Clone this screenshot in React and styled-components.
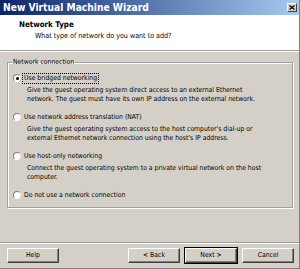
import React from 'react';
import styled, { createGlobalStyle, css } from 'styled-components';

const GlobalStyle = createGlobalStyle`
  html, body {
    margin: 0;
    padding: 0;
    background: #d4d0c8;
  }
`;

const FONT = `"DejaVu Sans Condensed", "DejaVu Sans", Tahoma, sans-serif`;

const Window = styled.div`
  width: 300px;
  height: 269px;
  box-sizing: border-box;
  display: flex;
  flex-direction: column;
  background: #d4d0c8;
  border-right: 1px solid #808080;
  border-bottom: 1px solid #808080;
  font-family: ${FONT};
  font-size: 6.8px;
  color: #000;
  overflow: hidden;
`;

const TitleBar = styled.div`
  height: 15px;
  flex: none;
  display: flex;
  align-items: center;
  justify-content: space-between;
  padding: 0 2px 0 3px;
  background: linear-gradient(to right, #0a246a, #a6caf0);
`;

const TitleText = styled.span`
  color: #fff;
  font-weight: bold;
  font-size: 10.2px;
`;

const CloseButton = styled.div`
  width: 10px;
  height: 9px;
  box-sizing: border-box;
  background: #d4d0c8;
  border: 1px solid;
  border-color: #fff #404040 #404040 #fff;
  display: flex;
  align-items: center;
  justify-content: center;
  svg {
    display: block;
  }
`;

const Header = styled.div`
  height: 36px;
  flex: none;
  background: #fff;
  border-bottom: 1px solid #a0a0a0;
  box-shadow: 0 1px 0 #fff;
  padding: 5px 0 0 19px;
  box-sizing: border-box;
`;

const HeaderTitle = styled.div`
  font-weight: bold;
  font-size: 7.9px;
  line-height: 10px;
`;

const HeaderSub = styled.div`
  font-size: 7.1px;
  line-height: 11px;
  padding-left: 16px;
`;

const Body = styled.div`
  flex: 1;
  padding: 6px 6px 0 7px;
`;

const Group = styled.fieldset`
  margin: 0;
  padding: 6px 0 7px 5px;
  border: 1px solid #a0a0a0;
  box-shadow: inset 1px 1px 0 #fff, 1px 1px 0 #fff;
`;

const Legend = styled.legend`
  padding: 0 1px;
  margin-left: -1px;
  line-height: 10px;
`;

const Option = styled.div`
  margin-bottom: 8px;
  &:last-child {
    margin-bottom: 0;
  }
`;

const OptionRow = styled.div`
  display: flex;
  align-items: center;
  height: 10px;
`;

const Radio = styled.span`
  width: 8px;
  height: 8px;
  box-sizing: border-box;
  border-radius: 50%;
  border: 1px solid;
  border-color: #808080 #e8e8e8 #fff #808080;
  background: #fff;
  margin-right: 1px;
  position: relative;
  flex: none;
  ${(p) =>
    p.checked &&
    css`
      &::after {
        content: '';
        position: absolute;
        left: 1.5px;
        top: 1.5px;
        width: 3px;
        height: 3px;
        border-radius: 50%;
        background: #000;
      }
    `}
`;

const Label = styled.span`
  line-height: 9px;
  padding: 0 1px;
  border: 1px dotted ${(p) => (p.focused ? '#000' : 'transparent')};
  white-space: nowrap;
`;

const DescBlock = styled.div`
  margin-top: 3px;
  padding-left: 14px;
  line-height: 9px;
  white-space: nowrap;
`;

const Footer = styled.div`
  flex: none;
  height: 26px;
  box-sizing: border-box;
  border-top: 1px solid #a0a0a0;
  box-shadow: inset 0 1px 0 #fff;
  display: flex;
  align-items: center;
  padding: 0 5px 1px 7px;
`;

const Button = styled.button`
  width: 52px;
  height: 15px;
  box-sizing: border-box;
  padding: 0;
  margin: 0 0 0 ${(p) => p.gap || 0}px;
  font-family: ${FONT};
  font-size: 6.8px;
  color: #000;
  background: #d4d0c8;
  border: 1px solid;
  border-color: #fff #404040 #404040 #fff;
  box-shadow: inset -1px -1px 0 #808080;
  ${(p) =>
    p.primary &&
    css`
      outline: 1px solid #000;
      outline-offset: 0;
    `}
`;

const Spacer = styled.div`
  flex: 1;
`;

const options = [
  {
    label: 'Use bridged networking',
    checked: true,
    desc: [
      'Give the guest operating system direct access to an external Ethernet',
      'network. The guest must have its own IP address on the external network.',
    ],
  },
  {
    label: 'Use network address translation (NAT)',
    desc: [
      "Give the guest operating system access to the host computer's dial-up or",
      "external Ethernet network connection using the host's IP address.",
    ],
  },
  {
    label: 'Use host-only networking',
    desc: [
      'Connect the guest operating system to a private virtual network on the host',
      'computer.',
    ],
  },
  { label: 'Do not use a network connection', desc: [] },
];

export default function App() {
  return (
    <>
      <GlobalStyle />
      <Window>
        <TitleBar>
          <TitleText>New Virtual Machine Wizard</TitleText>
          <CloseButton>
            <svg width="6" height="5" viewBox="0 0 6 5">
              <path d="M0.5 0.5 L5.5 4.5 M5.5 0.5 L0.5 4.5" stroke="#000" strokeWidth="1.2" />
            </svg>
          </CloseButton>
        </TitleBar>
        <Header>
          <HeaderTitle>Network Type</HeaderTitle>
          <HeaderSub>What type of network do you want to add?</HeaderSub>
        </Header>
        <Body>
          <Group>
            <Legend>Network connection</Legend>
            {options.map((o) => (
              <Option key={o.label}>
                <OptionRow>
                  <Radio checked={o.checked} />
                  <Label focused={o.checked}>{o.label}</Label>
                </OptionRow>
                {o.desc.length > 0 && (
                  <DescBlock>
                    {o.desc.map((line) => (
                      <div key={line}>{line}</div>
                    ))}
                  </DescBlock>
                )}
              </Option>
            ))}
          </Group>
        </Body>
        <Footer>
          <Button>Help</Button>
          <Spacer />
          <Button>&lt; Back</Button>
          <Button gap={5} primary>
            Next &gt;
          </Button>
          <Button gap={5}>Cancel</Button>
        </Footer>
      </Window>
    </>
  );
}
